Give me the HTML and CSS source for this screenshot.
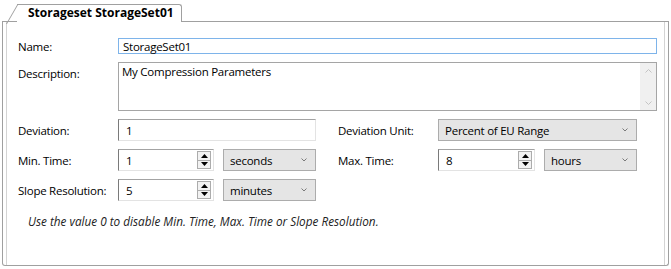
FILE: index.html
```html
<!DOCTYPE html>
<html lang="en">

<head>
  <meta charset="UTF-8">
  <title>Storageset StorageSet01</title>
  <link rel="stylesheet" href="styles.css">
</head>

<body>

  <div class="tab-strip">
    <div class="tab-lead"></div>
    <div class="tab">Storageset StorageSet01</div>
    <div class="tab-fill"></div>
  </div>

  <section class="panel">
    <div class="page">

      <div class="row row-name">
        <span class="label">Name:</span>
        <div class="textbox focused grow">StorageSet01</div>
      </div>

      <div class="row row-desc">
        <span class="label label-top">Description:</span>
        <div class="memo grow">
          <span class="memo-text">My Compression Parameters</span>
          <div class="scrollbar">
            <svg width="7" height="4" viewBox="0 0 7 4"><path d="M0.5 3.5 L3.5 0.5 L6.5 3.5" fill="none" stroke="#c4c4c4"/></svg>
            <svg width="7" height="4" viewBox="0 0 7 4"><path d="M0.5 0.5 L3.5 3.5 L6.5 0.5" fill="none" stroke="#c4c4c4"/></svg>
          </div>
        </div>
      </div>

      <div class="row">
        <div class="col">
          <span class="label">Deviation:</span>
          <div class="textbox sunken field">1</div>
        </div>
        <div class="col col-right">
          <span class="label">Deviation Unit:</span>
          <div class="combo field">
            <span>Percent of EU Range</span>
            <svg width="6" height="4" viewBox="0 0 6 4"><path d="M0.5 0.5 L3 3 L5.5 0.5" fill="none" stroke="#7a7a7a"/></svg>
          </div>
        </div>
      </div>

      <div class="row">
        <div class="col">
          <span class="label">Min. Time:</span>
          <div class="field pair">
            <div class="spinner sunken">
              <span class="spin-value">1</span>
              <div class="spin-btns">
                <div class="spin-btn"><svg width="7" height="4" viewBox="0 0 7 4"><path d="M0 4 L3.5 0 L7 4 Z" fill="#000"/></svg></div>
                <div class="spin-btn"><svg width="7" height="4" viewBox="0 0 7 4"><path d="M0 0 L3.5 4 L7 0 Z" fill="#000"/></svg></div>
              </div>
            </div>
            <div class="combo combo-unit">
              <span>seconds</span>
              <svg width="6" height="4" viewBox="0 0 6 4"><path d="M0.5 0.5 L3 3 L5.5 0.5" fill="none" stroke="#7a7a7a"/></svg>
            </div>
          </div>
        </div>
        <div class="col col-right">
          <span class="label">Max. Time:</span>
          <div class="field pair">
            <div class="spinner sunken">
              <span class="spin-value">8</span>
              <div class="spin-btns">
                <div class="spin-btn"><svg width="7" height="4" viewBox="0 0 7 4"><path d="M0 4 L3.5 0 L7 4 Z" fill="#000"/></svg></div>
                <div class="spin-btn"><svg width="7" height="4" viewBox="0 0 7 4"><path d="M0 0 L3.5 4 L7 0 Z" fill="#000"/></svg></div>
              </div>
            </div>
            <div class="combo combo-unit">
              <span>hours</span>
              <svg width="6" height="4" viewBox="0 0 6 4"><path d="M0.5 0.5 L3 3 L5.5 0.5" fill="none" stroke="#7a7a7a"/></svg>
            </div>
          </div>
        </div>
      </div>

      <div class="row">
        <div class="col">
          <span class="label">Slope Resolution:</span>
          <div class="field pair">
            <div class="spinner sunken">
              <span class="spin-value">5</span>
              <div class="spin-btns">
                <div class="spin-btn"><svg width="7" height="4" viewBox="0 0 7 4"><path d="M0 4 L3.5 0 L7 4 Z" fill="#000"/></svg></div>
                <div class="spin-btn"><svg width="7" height="4" viewBox="0 0 7 4"><path d="M0 0 L3.5 4 L7 0 Z" fill="#000"/></svg></div>
              </div>
            </div>
            <div class="combo combo-unit">
              <span>minutes</span>
              <svg width="6" height="4" viewBox="0 0 6 4"><path d="M0.5 0.5 L3 3 L5.5 0.5" fill="none" stroke="#7a7a7a"/></svg>
            </div>
          </div>
        </div>
      </div>

      <p class="note">Use the value 0 to disable Min. Time, Max. Time or Slope Resolution.</p>

    </div>
  </section>

</body>

</html>
```

FILE: styles.css
```css
* {
  box-sizing: border-box;
}

body {
  margin: 0;
  font-family: "Open Sans", "Noto Sans", sans-serif;
  font-size: 11.5px;
  letter-spacing: -0.25px;
  color: #000;
  background: #fff;
}

/* Tab header */
.tab-strip {
  display: flex;
  align-items: flex-end;
  height: 22px;
  margin: 0 2px;
}

.tab-lead {
  width: 15px;
  border-bottom: 1px solid #a0a0a0;
}

.tab {
  position: relative;
  height: 18px;
  padding: 0 7px 0 11px;
  border-top: 1px solid #a0a0a0;
  border-right: 1px solid #a0a0a0;
  border-top-right-radius: 3px;
  font-size: 12px;
  font-weight: bold;
  letter-spacing: 0;
  line-height: 16px;
  white-space: nowrap;
}

.tab::before {
  content: "";
  position: absolute;
  left: -11px;
  top: -1px;
  width: 11px;
  height: 19px;
  border-left: 1px solid #a0a0a0;
  border-top: 1px solid #a0a0a0;
  transform: skewX(-30deg);
  transform-origin: bottom left;
}

.tab-fill {
  flex: 1;
  border-bottom: 1px solid #a0a0a0;
}

/* Tab page */
.panel {
  height: 244px;
  margin: 0 2px;
  padding: 0 3px;
  border: 1px solid #a0a0a0;
  border-top: none;
  border-radius: 0 0 3px 3px;
}

.page {
  height: 100%;
  padding: 16px 7px 0 11px;
  border-left: 1px solid #d4d4d4;
  border-right: 1px solid #d4d4d4;
}

.row {
  display: flex;
  align-items: center;
  height: 22px;
  margin-top: 8px;
}

.row-name {
  height: 16px;
  margin-top: 0;
}

.row-desc {
  height: 49px;
  align-items: flex-start;
}

.label {
  width: 100px;
  flex-shrink: 0;
  white-space: nowrap;
}

.label-top {
  padding-top: 4px;
}

.grow {
  flex: 1;
}

.col {
  display: flex;
  align-items: center;
  height: 100%;
}

.col .field {
  width: 198px;
}

.col-right {
  margin-left: 22px;
}

.col-right .field {
  width: 199px;
}

/* Inputs */
.textbox {
  height: 100%;
  padding-left: 4px;
  display: flex;
  align-items: center;
  border: 1px solid #a0a0a0;
}

.focused {
  border-color: #7eb4ea;
}

.sunken {
  border-color: #a3a3a3 #e3e3e3 #e3e3e3 #7a7a7a;
}

.textbox.sunken {
  padding-left: 7px;
}

.memo {
  height: 100%;
  display: flex;
  border: 1px solid #a5a5a5;
}

.memo-text {
  flex: 1;
  padding: 1px 0 0 3px;
}

.scrollbar {
  width: 16px;
  background: #f0f0f0;
  display: flex;
  flex-direction: column;
  justify-content: space-between;
  align-items: center;
  padding: 6px 0 5px;
}

.combo {
  height: 100%;
  display: flex;
  align-items: center;
  justify-content: space-between;
  padding: 0 8px 0 6px;
  background: #e5e5e5;
  border: 1px solid #acacac;
}

.pair {
  height: 100%;
  display: flex;
  justify-content: space-between;
}

.spinner {
  height: 100%;
  display: flex;
  align-items: center;
  border-width: 1px;
  border-style: solid;
}

.col .spinner {
  width: 96px;
}

.col-right .spinner {
  width: 97px;
}

.spin-value {
  flex: 1;
  padding-left: 7px;
}

.spin-btns {
  width: 14px;
  height: 100%;
  margin-right: 2px;
  padding: 1px 0;
  display: flex;
  flex-direction: column;
}

.spin-btn {
  flex: 1;
  display: flex;
  align-items: center;
  justify-content: center;
  background: #f2f2f2;
  border: 1px solid #acacac;
}

.spin-btn + .spin-btn {
  border-top: none;
}

.combo-unit {
  width: 93px;
}

.note {
  margin: 12px 0 0;
  padding-left: 10px;
  font-size: 11.75px;
  font-style: italic;
  letter-spacing: 0;
  color: #222;
}
```
